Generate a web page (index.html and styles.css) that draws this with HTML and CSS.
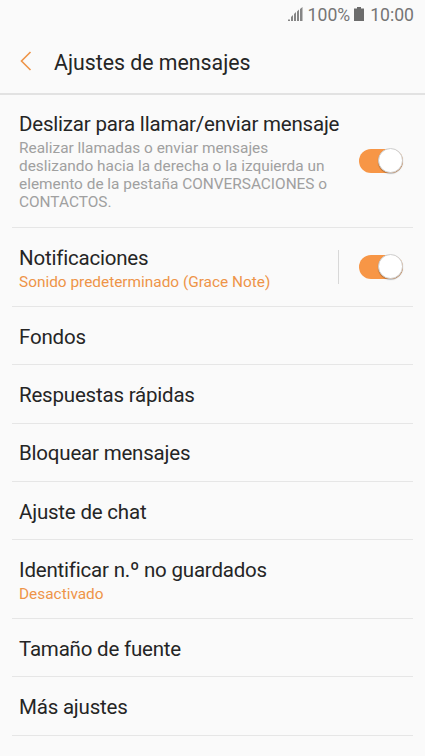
FILE: index.html
```html
<!DOCTYPE html>
<html lang="es">
<head>
    <meta charset="UTF-8">
    <meta name="viewport" content="width=device-width, initial-scale=1.0">
    <title>Ajustes de mensajes</title>
    <link rel="stylesheet" href="styles.css">
</head>
<body>
    <div class="status-bar">
        <svg class="signal-icon" viewBox="0 0 15 14"><path d="M0 12.5h2V14H0zM3 10l2-2v6H3zM6 7l2-2v9H6zM9 4.5l2-2V14H9zM12 2l2.5-2v14H12z"/></svg>
        <span class="battery-level">100%</span>
        <svg class="battery-icon" viewBox="0 0 10 14"><path d="M3 0h4v1.5h3V14H0V1.5h3z"/></svg>
        <span class="clock">10:00</span>
    </div>
    <header class="header">
        <svg class="back-icon" viewBox="0 0 12 20"><path d="M10.5 1L1.5 10l9 9"/></svg>
        <h1>Ajustes de mensajes</h1>
    </header>
    <ul class="settings">
        <li class="item item-swipe">
            <div class="text">
                <div class="title">Deslizar para llamar/enviar mensaje</div>
                <div class="description">Realizar llamadas o enviar mensajes<br>deslizando hacia la derecha o la izquierda un<br>elemento de la pestaña CONVERSACIONES o<br>CONTACTOS.</div>
            </div>
            <div class="switch"><div class="knob"></div></div>
        </li>
        <li class="item item-double">
            <div class="text">
                <div class="title">Notificaciones</div>
                <div class="value">Sonido predeterminado (Grace Note)</div>
            </div>
            <div class="divider"></div>
            <div class="switch"><div class="knob"></div></div>
        </li>
        <li class="item"><div class="title">Fondos</div></li>
        <li class="item"><div class="title">Respuestas rápidas</div></li>
        <li class="item"><div class="title">Bloquear mensajes</div></li>
        <li class="item"><div class="title">Ajuste de chat</div></li>
        <li class="item item-double">
            <div class="text">
                <div class="title">Identificar n.º no guardados</div>
                <div class="value">Desactivado</div>
            </div>
        </li>
        <li class="item"><div class="title">Tamaño de fuente</div></li>
        <li class="item"><div class="title">Más ajustes</div></li>
    </ul>
</body>
</html>
```
FILE: styles.css
```css
* {
    box-sizing: border-box;
}
body {
    font-family: Roboto, "Liberation Sans", sans-serif;
    margin: 0;
    height: 100vh;
    overflow: hidden;
    background-color: #fafafa;
    color: #252525;
}
.status-bar {
    display: flex;
    justify-content: flex-end;
    align-items: center;
    height: 28px;
    padding-right: 11px;
    font-size: 17.6px;
    color: #757575;
}
.battery-level,
.clock {
    padding-top: 1px;
}
.signal-icon {
    width: 15px;
    height: 14px;
    margin-right: 5px;
    fill: #858585;
}
.battery-icon {
    width: 10px;
    height: 14px;
    margin: 0 6px 0 4px;
    fill: #6c6c6c;
}
.header {
    display: flex;
    align-items: center;
    height: 67px;
    padding: 0 20px;
    border-bottom: 2px solid #e2e2e2;
}
.back-icon {
    width: 12px;
    height: 20px;
    margin-right: 22px;
    fill: none;
    stroke: #ee9448;
    stroke-width: 1.6;
}
h1 {
    margin: 0;
    padding-top: 5px;
    font-size: 21.3px;
    font-weight: 400;
    line-height: 24px;
}
.settings {
    list-style: none;
    margin: 0;
    padding: 0 12px;
}
.item {
    display: flex;
    align-items: center;
    height: 58.3px;
    padding: 0 10px 0 7px;
    border-bottom: 1px solid #e6e6e6;
}
.item-swipe {
    height: 133px;
}
.item-double {
    height: 79px;
}
.text {
    flex: 1;
    white-space: nowrap;
}
.title {
    font-size: 20.5px;
    line-height: 25px;
    letter-spacing: -0.2px;
}
.item > .title {
    padding-top: 3px;
}
.item-double .text {
    padding-top: 5px;
}
.description {
    margin-top: 2px;
    font-size: 15.4px;
    line-height: 18px;
    color: #a0a0a0;
}
.value {
    font-size: 15.4px;
    line-height: 22px;
    color: #ee9448;
}
.divider {
    width: 1px;
    height: 34px;
    margin-right: 20px;
    background-color: #d8d8d8;
}
.switch {
    display: flex;
    align-items: center;
    justify-content: flex-end;
    width: 44px;
    height: 24px;
    border-radius: 12px;
    background-color: #f79646;
}
.knob {
    flex: none;
    width: 25px;
    height: 25px;
    margin-bottom: 1px;
    border: 1px solid #cfcfcf;
    border-radius: 50%;
    background-color: #fff;
    box-shadow: 0 1px 1px rgba(0, 0, 0, 0.25);
}
```
